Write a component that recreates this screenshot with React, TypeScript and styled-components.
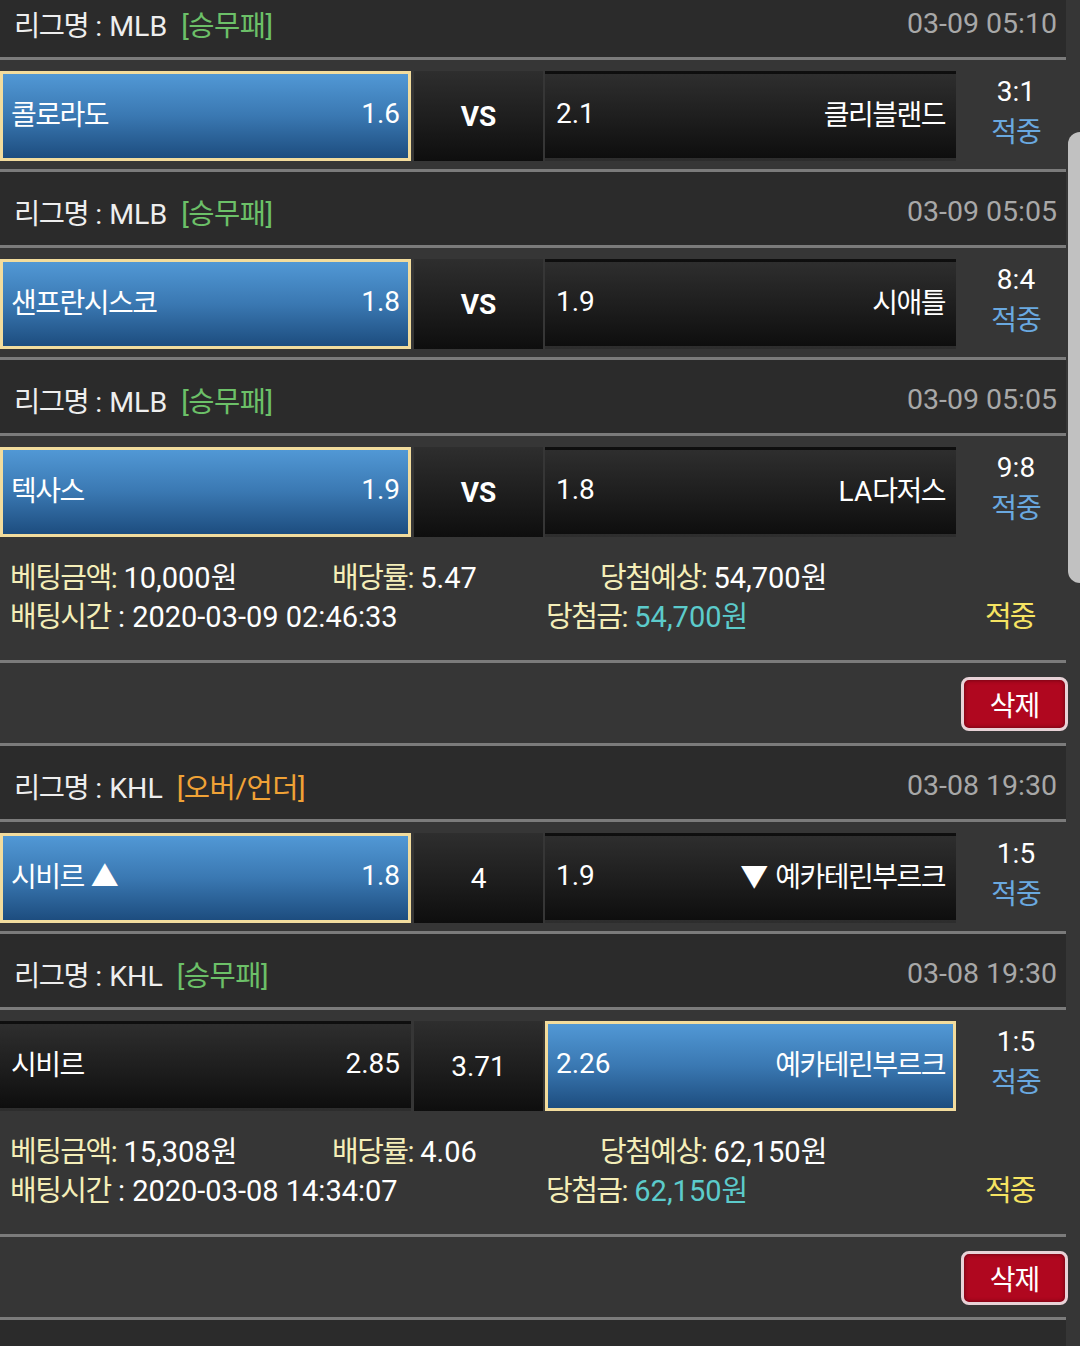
import React from "react";
import styled, { createGlobalStyle, css } from "styled-components";

const Global = createGlobalStyle`
  *, *::before, *::after { box-sizing: border-box; }
  html, body { margin: 0; padding: 0; background: #363636; }
  body {
    font-family: Roboto, "Noto Sans CJK KR", sans-serif;
    color: #ffffff;
    overflow: hidden;
  }
`;

const Page = styled.div`
  width: 1066px;
  margin-top: -19px;
`;

const Header = styled.div`
  display: flex;
  align-items: center;
  justify-content: space-between;
  height: 79px;
  padding: 6px 9px 0 14px;
  background: #2b2b2b;
  border-top: 3px solid #7b7b7b;
  border-bottom: 3px solid #7b7b7b;
  font-size: 28.5px;
`;

const League = styled.div`
  color: #eeeeee;
  white-space: nowrap;
`;

const Ko = styled.span`
  letter-spacing: -1.5px;
`;

const MarketTag = styled.span<{ $color: string }>`
  color: ${(p) => p.$color};
  margin-left: 14px;
  letter-spacing: -0.5px;
`;

const Time = styled.div`
  color: #a8a8a8;
`;

const Row = styled.div`
  display: flex;
  height: 109px;
  padding: 11px 0 8px;
  font-size: 28px;
`;

const darkBg = css`
  background: linear-gradient(to bottom, #2e2e2e 0%, #1d1d1d 55%, #0e0e0e 100%);
`;

const blueBg = css`
  border: 3px solid #f2dc9d;
  background: linear-gradient(to bottom, #5198d5 0%, #3a78b2 50%, #1d4d7f 100%);
`;

const TeamCell = styled.div<{ $picked: boolean }>`
  display: flex;
  align-items: center;
  justify-content: space-between;
  width: 411px;
  height: 90px;
  padding: 0 8px 6px;
  border: 3px solid transparent;
  white-space: nowrap;
  ${(p) => (p.$picked ? blueBg : darkBg)}
`;

const MidCell = styled.div<{ $bold: boolean; $picked: boolean }>`
  display: flex;
  align-items: center;
  justify-content: center;
  width: 129px;
  height: 90px;
  margin: 0 2px 0 3px;
  font-weight: ${(p) => (p.$bold ? 700 : 400)};
  ${(p) => (p.$picked ? blueBg : darkBg)}
`;

const ScoreCol = styled.div`
  flex: 1;
  display: flex;
  flex-direction: column;
  align-items: center;
  justify-content: center;
  padding: 0 0 8px 10px;
  line-height: 41px;
`;

const Score = styled.div`
  color: #ffffff;
`;

const Result = styled.div<{ $color: string }>`
  color: ${(p) => p.$color};
  letter-spacing: -1px;
`;

const Summary = styled.div`
  padding: 14px 10px 23px;
  border-bottom: 3px solid #7b7b7b;
  font-size: 29px;
  line-height: 39px;
`;

const SummaryLine = styled.div<{ $cols: string }>`
  display: grid;
  grid-template-columns: ${(p) => p.$cols};
  white-space: nowrap;
`;

const Label = styled.span`
  color: #f4eeb8;
  letter-spacing: -1.5px;
`;

const Value = styled.span<{ $color?: string }>`
  color: ${(p) => p.$color || "#ffffff"};
`;

const Hit = styled.span`
  color: #f6e462;
  letter-spacing: -2px;
`;

const ActionRow = styled.div`
  display: flex;
  justify-content: flex-end;
  height: 80px;
  padding: 14px 0 12px;
`;

const DeleteButton = styled.button`
  width: 107px;
  height: 54px;
  margin-right: -2px;
  border: 3px solid #e8d2d7;
  border-radius: 8px;
  background: #b0071f;
  box-shadow: inset 0 0 4px rgba(60, 0, 10, 0.7);
  color: #ffffff;
  font-family: Roboto, "Noto Sans CJK KR", sans-serif;
  font-size: 28px;
  letter-spacing: -1px;
  padding: 0;
  cursor: pointer;
`;

const ScrollThumb = styled.div`
  position: fixed;
  top: 132px;
  right: 0;
  width: 12px;
  height: 451px;
  background: #c1c1c1;
  border-radius: 12px 0 0 12px;
`;

type Match = {
  league: string;
  market: string;
  marketColor: string;
  time: string;
  home: React.ReactNode;
  homeOdds: string;
  mid: string;
  midBold: boolean;
  awayOdds: string;
  away: React.ReactNode;
  pick: "home" | "mid" | "away";
  score: string;
};

type Bet = {
  matches: Match[];
  amount: string;
  rate: string;
  expected: string;
  time: string;
  won: string;
};

const GREEN = "#6cc068";
const ORANGE = "#f0a236";

const bets: Bet[] = [
  {
    matches: [
      {
        league: "MLB",
        market: "[승무패]",
        marketColor: GREEN,
        time: "03-09 05:10",
        home: <Ko>콜로라도</Ko>,
        homeOdds: "1.6",
        mid: "VS",
        midBold: true,
        awayOdds: "2.1",
        away: <Ko>클리블랜드</Ko>,
        pick: "home",
        score: "3:1",
      },
      {
        league: "MLB",
        market: "[승무패]",
        marketColor: GREEN,
        time: "03-09 05:05",
        home: <Ko>샌프란시스코</Ko>,
        homeOdds: "1.8",
        mid: "VS",
        midBold: true,
        awayOdds: "1.9",
        away: <Ko>시애틀</Ko>,
        pick: "home",
        score: "8:4",
      },
      {
        league: "MLB",
        market: "[승무패]",
        marketColor: GREEN,
        time: "03-09 05:05",
        home: <Ko>텍사스</Ko>,
        homeOdds: "1.9",
        mid: "VS",
        midBold: true,
        awayOdds: "1.8",
        away: (
          <span>
            LA<Ko>다저스</Ko>
          </span>
        ),
        pick: "home",
        score: "9:8",
      },
    ],
    amount: "10,000",
    rate: "5.47",
    expected: "54,700",
    time: "2020-03-09 02:46:33",
    won: "54,700",
  },
  {
    matches: [
      {
        league: "KHL",
        market: "[오버/언더]",
        marketColor: ORANGE,
        time: "03-08 19:30",
        home: (
          <span>
            <Ko>시비르</Ko> ▲
          </span>
        ),
        homeOdds: "1.8",
        mid: "4",
        midBold: false,
        awayOdds: "1.9",
        away: (
          <span>
            ▼ <Ko>예카테린부르크</Ko>
          </span>
        ),
        pick: "home",
        score: "1:5",
      },
      {
        league: "KHL",
        market: "[승무패]",
        marketColor: GREEN,
        time: "03-08 19:30",
        home: <Ko>시비르</Ko>,
        homeOdds: "2.85",
        mid: "3.71",
        midBold: false,
        awayOdds: "2.26",
        away: <Ko>예카테린부르크</Ko>,
        pick: "away",
        score: "1:5",
      },
    ],
    amount: "15,308",
    rate: "4.06",
    expected: "62,150",
    time: "2020-03-08 14:34:07",
    won: "62,150",
  },
];

function MatchBlock({ m }: { m: Match }) {
  return (
    <>
      <Header>
        <League>
          <Ko>리그명</Ko> : {m.league}
          <MarketTag $color={m.marketColor}>{m.market}</MarketTag>
        </League>
        <Time>{m.time}</Time>
      </Header>
      <Row>
        <TeamCell $picked={m.pick === "home"}>
          <span>{m.home}</span>
          <span>{m.homeOdds}</span>
        </TeamCell>
        <MidCell $bold={m.midBold} $picked={m.pick === "mid"}>
          {m.mid}
        </MidCell>
        <TeamCell $picked={m.pick === "away"}>
          <span>{m.awayOdds}</span>
          <span>{m.away}</span>
        </TeamCell>
        <ScoreCol>
          <Score>{m.score}</Score>
          <Result $color="#6aa9e0">적중</Result>
        </ScoreCol>
      </Row>
    </>
  );
}

function BetBlock({ bet }: { bet: Bet }) {
  return (
    <>
      {bet.matches.map((m, i) => (
        <MatchBlock key={i} m={m} />
      ))}
      <Summary>
        <SummaryLine $cols="322px 268px auto">
          <span>
            <Label>베팅금액:</Label> <Value>{bet.amount}</Value>
            <Ko>원</Ko>
          </span>
          <span>
            <Label>배당률:</Label> <Value>{bet.rate}</Value>
          </span>
          <span>
            <Label>당첨예상:</Label> <Value>{bet.expected}</Value>
            <Ko>원</Ko>
          </span>
        </SummaryLine>
        <SummaryLine $cols="536px 439px auto">
          <span>
            <Label>배팅시간</Label> : <Value>{bet.time}</Value>
          </span>
          <span>
            <Label>당첨금:</Label>{" "}
            <Value $color="#5ccbcb">
              {bet.won}
              <Ko>원</Ko>
            </Value>
          </span>
          <Hit>적중</Hit>
        </SummaryLine>
      </Summary>
      <ActionRow>
        <DeleteButton>삭제</DeleteButton>
      </ActionRow>
    </>
  );
}

export default function App() {
  return (
    <>
      <Global />
      <Page>
        {bets.map((b, i) => (
          <BetBlock key={i} bet={b} />
        ))}
        <Header />
      </Page>
      <ScrollThumb />
    </>
  );
}
